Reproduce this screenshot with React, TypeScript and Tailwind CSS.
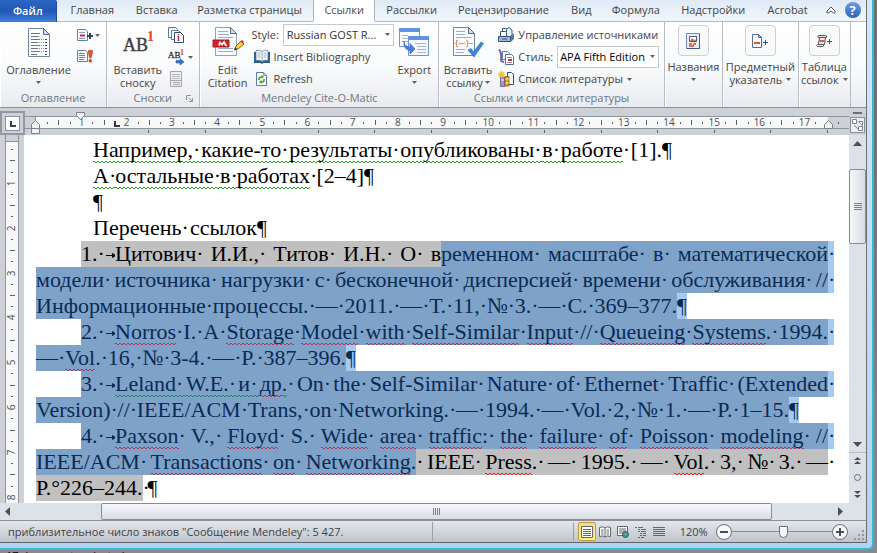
import { useState } from "react"
import type { ReactNode } from "react"
import clsx from "clsx"

type Tone = "plain" | "gray" | "blue" | "light"
type Mark = "red" | "green"

interface Word {
    text: string
    tone: Tone
    mark?: Mark
    // glued to the next piece: no space dot after it
    glue?: boolean
}

interface Line {
    words: Word[]
    item?: string
    indent?: string
    width?: string
    pilcrow?: Tone
    trailing?: Tone
}


// "~" in front of a word is a spelling mark, "^" is a grammar mark, "+" at the end glues it to the next one
function run(tone: Tone, source: string): Word[] {
    return source.split(" ").map((raw) => {
        const mark: Mark | undefined = raw[0] === "~" ? "red" : raw[0] === "^" ? "green" : undefined
        const glue = raw.endsWith("+")
        return { text: raw.slice(mark ? 1 : 0, glue ? -1 : undefined), tone, mark, glue }
    })
}

const lines: Line[] = [
    {
        indent: "ml-[57px]", width: "w-[579px]", pilcrow: "plain",
        words: run("plain", "^Например, ^какие-то ^результаты ^опубликованы ^в ^работе+  [1]."),
    },
    { indent: "ml-[57px]", width: "w-[281px]", pilcrow: "plain", words: run("plain", "^А ^остальные ^в ^работах+  [2–4]") },
    { indent: "ml-[57px]", width: "w-fit", pilcrow: "plain", words: [] },
    { indent: "ml-[57px]", width: "w-[174px]", pilcrow: "plain", words: run("plain", "Перечень ссылок") },
    {
        item: "1.", indent: "ml-[45px]", trailing: "light",
        words: [...run("gray", "Цитович И.И., Титов И.Н. О в+"), ...run("blue", "ременном масштабе в математической")],
    },
    { trailing: "light", words: run("blue", "модели источника нагрузки с бесконечной дисперсией времени обслуживания //") },
    { width: "w-[651px]", pilcrow: "light", words: run("blue", "Информационные процессы. — 2011. — Т. 11, № 3. — С. 369–377.") },
    {
        item: "2.", indent: "ml-[45px]", trailing: "light",
        words: run("blue", "~Norros I. A ~Storage ~Model ~with ~Self-Similar ~Input // ~Queueing ~Systems+ . 1994."),
    },
    { width: "w-[320px]", pilcrow: "light", words: run("blue", "— ~Vol+ . 16, № 3-4. — P. 387–396.") },
    {
        item: "3.", indent: "ml-[45px]", trailing: "light",
        words: run("blue", "^Leland ^W.E. ^и ~др+ ^.+  On the Self-Similar Nature of Ethernet Traffic (Extended"),
    },
    { width: "w-[763px]", pilcrow: "light", words: run("blue", "Version) // IEEE/ACM Trans, on Networking. — 1994. — Vol. 2, № 1. — P. 1–15.") },
    {
        item: "4.", indent: "ml-[45px]", trailing: "light",
        words: run("blue", "~Paxson V., ~Floyd S. ~Wide ~area ~traffic+ : ~the ~failure ~of ~Poisson ~modeling //"),
    },
    {
        trailing: "plain",
        words: [
            ...run("blue", "IEEE/ACM ~Transactions ~on ~Networking+ .+"),
            ...run("gray", " IEEE ~Press+ . — 1995. — ~Vol+ . 3, № 3. —"),
        ],
    },
    { width: "w-fit", pilcrow: "plain", words: [...run("gray", "P.°226–244.+"), ...run("plain", " ")] },
]

const tones: Record<Tone, string> = {
    plain: "text-black",
    gray: "bg-[#c0c0c0] text-black",
    blue: "bg-[#7fa3c8] text-[#0a2a55]",
    light: "bg-[#a6caf0] text-[#0a2a55]",
}

const wave =
    "bg-[linear-gradient(90deg,var(--wave)_50%,transparent_50%),linear-gradient(90deg,transparent_50%,var(--wave)_50%)] [background-size:4px_1px] bg-repeat-x [background-position:0_24px,0_25px]"

function waveColor(mark: Mark, tone: Tone) {
    if (mark === "green") return tone === "blue" ? "[--wave:#24806c]" : "[--wave:#1c9a1c]"
    return tone === "blue" ? "[--wave:#b0355f]" : "[--wave:#ff1a1a]"
}

function DocLine({ line }: { line: Line }) {
    const last = line.words.length - 1
    return (
        <p className={clsx("flex h-[26px] whitespace-nowrap", line.indent, line.width)}>
            {line.item && (
                <span className={clsx("flex w-[34px] shrink-0", tones[line.words[0].tone])}>
                    {line.item}·
                    <svg className="mt-[11px] h-[7px] w-3 shrink-0" viewBox="0 0 12 7" fill="none" stroke="currentColor">
                        <path d="M1 3.5h9M7.5 1.5l3 2-3 2z" fill="currentColor" />
                    </svg>
                </span>
            )}
            {line.words.map((word, i) => {
                const closed = word.glue || i === last
                const marked = word.mark && clsx(wave, waveColor(word.mark, word.tone))
                return (
                    <span key={i} className={clsx("flex", tones[word.tone], !closed && "grow")}>
                        <span className={clsx("flex", marked, word.mark === "green" && "grow")}>
                            {word.text}
                            {!closed && word.mark === "green" && <span className="w-[5px]">·</span>}
                        </span>
                        {!closed && word.mark !== "green" && <span className="w-[5px]">·</span>}
                    </span>
                )
            })}
            {line.pilcrow && <span className={tones[line.pilcrow]}>¶</span>}
            {line.trailing && <span className={clsx("-mr-1.5 w-1.5 shrink-0", tones[line.trailing])}>·</span>}
        </p>
    )
}


// icons

function Caret({ className }: { className?: string }) {
    return (
        <svg className={clsx("inline-block h-[3px] w-[5px] shrink-0", className)} viewBox="0 0 5 3">
            <path d="M0 0h5L2.5 3z" fill="#5c6066" />
        </svg>
    )
}

function TocIcon() {
    return (
        <svg className="size-8" viewBox="0 0 32 32">
            <path d="M5.5 1.5h15l6 6v22h-21z" fill="#fbfdff" stroke="#7186a3" />
            <path d="M20.5 1.5v6h6z" fill="#cfdff1" stroke="#526b8d" />
            <path d="M8 6.5h9M8 9.5h8M8 12.5h9M8 15.5h7M8 18.5h9M8 21.5h7M8 24.5h9M8 27.5h6" stroke="#66788f" />
            <path d="M18 12.5h3M16 15.5h5M18 18.5h3M16 21.5h5M18 24.5h3" stroke="#8a97aa" strokeDasharray="1 1" />
            <path d="M22 12.5h2M22 15.5h2M22 18.5h2M22 21.5h2M22 24.5h2M22 27.5h2" stroke="#2c4566" />
        </svg>
    )
}

function AddTextIcon() {
    return (
        <svg className="size-4" viewBox="0 0 16 16">
            <path d="M.5 2.5h8l2 2v9H.5z" fill="#f6faff" stroke="#6681a5" />
            <path d="M2 5.5h6M2 11.5h6" stroke="#8aa0bd" />
            <path d="M3 8.5h5" stroke="#c72c3b" strokeWidth="2" />
            <path d="M10 9h6M13 6v6" stroke="#33425a" strokeWidth="2" />
        </svg>
    )
}

function UpdateTocIcon() {
    return (
        <svg className="size-4" viewBox="0 0 16 16">
            <path d="M.5 1.5h8l2 2v9H.5z" fill="#f6faff" stroke="#6681a5" />
            <path d="M2 4.5h6M2 6.5h6M2 8.5h6M2 10.5h5" stroke="#71839d" />
            <path d="M11 2q2.500-2 5 0l-2 7h-1.500z" fill="#e8562a" stroke="#a8381b" strokeWidth=".5" />
            <circle cx="13.300" cy="11.700" r="1.700" fill="#d8401e" />
        </svg>
    )
}

function FootnoteIcon() {
    return (
        <svg className="size-8" viewBox="0 0 32 32" fontFamily="Liberation Serif, serif">
            <text x="1" y="24" fontSize="18" fill="#3c3c3c" stroke="#3c3c3c" strokeWidth=".4">AB</text>
            <text x="25" y="14" fontSize="14" fontWeight="bold" fill="#d8482a">1</text>
        </svg>
    )
}

function EndnoteIcon() {
    return (
        <svg className="size-4" viewBox="0 0 16 16" fontFamily="Liberation Serif, serif">
            <path d="M.5.5h7l2 2v8h-9z" fill="#f6faff" stroke="#5d7797" />
            <path d="M3.5 3.5h7l2 2v7h-9z" fill="#f6faff" stroke="#5d7797" />
            <path d="M6.5 5.5h6l3 3v7h-9z" fill="#fff" stroke="#2c4a73" />
            <text x="9" y="14" fontSize="10" fontWeight="bold" fill="#a32a3a">i</text>
        </svg>
    )
}

function NextFootnoteIcon() {
    return (
        <svg className="size-4" viewBox="0 0 16 16" fontFamily="Liberation Serif, serif">
            <text x="0" y="9" fontSize="9" fill="#333" stroke="#333" strokeWidth=".3">AB</text>
            <text x="12" y="6" fontSize="8" fontWeight="bold" fill="#d8482a">1</text>
            <path d="M8 11.5h4v-2l4 3.500-4 3v-2H8z" fill="#3f74cf" stroke="#2a56a4" strokeWidth=".6" />
        </svg>
    )
}

function ShowNotesIcon() {
    return (
        <svg className="size-4" viewBox="0 0 16 16">
            <path d="M2.5.5h11v15h-11z" fill="#f0eef1" stroke="#a7a5aa" />
            <path d="M4 3.5h8M4 5.5h8M4 7.5h8" stroke="#bbb7be" />
            <path d="M2.5 9.5h11" stroke="#a7a5aa" />
            <path d="M5 11.5h7M5 13.500h7" stroke="#aaa6ad" />
        </svg>
    )
}

function EditCitationIcon() {
    return (
        <svg className="size-8" viewBox="0 0 32 32">
            <path d="M3.5.5h15l6 6v22h-21z" fill="#f8fbff" stroke="#8da2c0" />
            <path d="M18.5.5v6h6z" fill="#cfdff1" stroke="#526b8d" />
            <path d="M6 4.5h10M6 7.5h11M6 10.5h15M6 21.5h15M6 24.5h15" stroke="#9aaccb" />
            <path d="M1 13h16v7H1z" fill="#d3222a" stroke="#a8161d" />
            <path d="M7 18.5l1-3 2 2 2-2.500 1.500 3 1.500.5" stroke="#fff" strokeWidth="1.700" fill="none" />
            <path d="M23 22l1-3 5-5 3 3-6 5z" fill="#ffd22e" stroke="#54461e" strokeWidth=".8" />
            <path d="M28.5 14.5L30 13l2 2-1.500 1.500z" fill="#d81f2a" />
            <path d="M22 23.5l1-3 2 2z" fill="#222" />
        </svg>
    )
}

function BookIcon() {
    return (
        <svg className="size-4 shrink-0" viewBox="0 0 16 16">
            <path d="M0 3h16v11H9.5L8 15l-1.500-1H0z" fill="#2a5f8e" />
            <path d="M2 1.5q4-1 6 1 2-2 6-1v10q-4-1-6 1-2-2-6-1z" fill="#fdfefe" stroke="#4b7396" strokeWidth=".7" />
            <path d="M8 2.5v10M3.500 4h3M3.500 6h3M3.500 8h3M9.500 4h3M9.500 6h3M9.500 8h3" stroke="#8096a8" strokeWidth=".8" />
        </svg>
    )
}

function RefreshIcon() {
    return (
        <svg className="size-4 shrink-0" viewBox="0 0 16 16">
            <path d="M2.5 1.5h7l3 3v10h-10z" fill="#fafcff" stroke="#5e7ba2" />
            <path d="M9.5 1.5v3h3z" fill="#cfe0f3" stroke="#5e7ba2" strokeWidth=".7" />
            <path d="M5 9V7.5Q5 6 8 6M10 8v1.500q0 1.500-3 1.500" fill="none" stroke="#57a01d" strokeWidth="1.600" />
            <path d="M7.5 3.800L10 6 7.500 8zM7.500 8.800L5 11l2.500 2z" fill="#57a01d" />
        </svg>
    )
}

function ExportIcon() {
    return (
        <svg className="size-8" viewBox="0 0 32 32">
            <path d="M1.5 1.5h20v18h-20z" fill="#fbfdff" stroke="#6c93d2" />
            <path d="M1 1h21v4H1z" fill="#5f93ea" />
            <path d="M4 8.5h6M4 11.5h6M4 14.5h6" stroke="#a9b6cb" />
            <path d="M10.5 9.5h20v19h-20z" fill="#f5f9ff" stroke="#6c93d2" />
            <path d="M10 9h21v4H10z" fill="#5f93ea" />
            <path d="M17 16.5h11M19 19.5h9M19 22.5h9M19 25.500h9" stroke="#a9b6cb" />
            <path d="M6 14q0 6 6 6v-3.500l5 5.500-5 5v-3.500q-7-1-6-9.500z" fill="#4a7fe0" stroke="#2e57b2" strokeWidth=".6" />
        </svg>
    )
}

function CitationIcon() {
    return (
        <svg className="size-8" viewBox="0 0 32 32">
            <path d="M1.5.5h15l6 6v22h-21z" fill="#f8fbff" stroke="#7186a3" />
            <path d="M16.5.5v6h6z" fill="#cfdff1" stroke="#526b8d" />
            <path d="M4 4.5h9M4 7.5h9M4 10.5h15M4 22.5h9M4 25.500h8M17 16.500h4" stroke="#9aaccb" />
            <path d="M6 13q-2 0-1.500 2 .3 1.500-1 1.500 1.300 0 1 1.500Q4 20 6 20M14 13q2 0 1.500 2-.3 1.500 1 1.500-1.300 0-1 1.500.5 2-1.500 2M6.500 17l1.200-1 1.200 1 1.200-1 1.200 1 1.200-1 1.200 1" fill="none" stroke="#d98836" />
            <path d="M16 23l3-1.500 2.500 3.500L29 15l2.500 1.500L22 30z" fill="#3d86dc" stroke="#2663b3" strokeWidth=".6" />
        </svg>
    )
}

function SourcesIcon() {
    return (
        <svg className="size-4 shrink-0" viewBox="0 0 16 16">
            <path d="M4.5 5V1.500h4L10 3v6H4.500z" fill="#f6fbff" stroke="#3b587f" />
            <path d="M8.5 4V2.500L11 .5l3 2.500V10H8.500z" fill="#e6f1fc" stroke="#3b587f" />
            <path d="M2.5 4.500h5l1 1V11h-6z" fill="#fff" stroke="#3b587f" />
            <path d="M.5 9.5h12v5H.5z" fill="#9db8d8" stroke="#34517a" />
            <path d="M12.5 9.5l3-2.500v5l-3 2.500z" fill="#557ba9" stroke="#34517a" strokeWidth=".6" />
            <path d="M4 12h5" stroke="#34517a" />
        </svg>
    )
}

function StyleIcon() {
    return (
        <svg className="size-4 shrink-0" viewBox="0 0 16 16">
            <path d="M1 .5q3 3 2 11l3 2" fill="none" stroke="#7263ad" strokeWidth="2" />
            <path d="M4.5 2.5h5l2 2v6h-7z" fill="#f2f6fd" stroke="#6c7da5" />
            <path d="M7.5 5.5h6l2 2v8h-8z" fill="#fff" stroke="#53719b" />
            <path d="M9 8.5h5M9 13.500h5" stroke="#7e93b4" />
            <path d="M10 11h4" stroke="#cc2d33" strokeWidth="2" />
        </svg>
    )
}

function BibliographyIcon() {
    return (
        <svg className="size-4 shrink-0" viewBox="0 0 16 16">
            <path d="M9.5 1.5h4l2 2v10h-6z" fill="#f6faff" stroke="#3f4a5c" />
            <path d="M2.5 6h4v9.500h-4z" fill="#a592c8" stroke="#62518b" strokeWidth=".8" />
            <path d="M7 5.500h4V15H7z" fill="#d9a520" stroke="#7c5b13" strokeWidth=".8" />
            <path d="M3 9h3M7.500 8h3M7.500 12h3" stroke="#fff4c4" />
            <path d="M3.500 0v7M0 3.500h7M1 1l5 5M6 1L1 6" stroke="#f2c331" strokeWidth="1.300" />
        </svg>
    )
}

function CaptionIcon() {
    return (
        <svg className="size-4" viewBox="0 0 16 16">
            <path d="M1.5.5h13v15h-13z" fill="#e7effa" stroke="#7088b8" />
            <path d="M4.5 3.5h7v5h-7z" fill="#fff" stroke="#3d5b97" />
            <path d="M5 8l2-3 2 2 1-1 1 2z" fill="#e26b26" />
            <path d="M4 11h3M8 11h3M4 13h5" stroke="#e04a20" strokeWidth="1.400" />
            <path d="M14.500 1v14.500H2" fill="none" stroke="#3d5b97" />
        </svg>
    )
}

function IndexIcon() {
    return (
        <svg className="size-4" viewBox="0 0 16 16">
            <path d="M.5 1.5h6l3 3v10h-9z" fill="#f4f8fe" stroke="#5a6f94" />
            <path d="M6.5 1.5v3h3z" fill="#c9d9ee" stroke="#4c6389" />
            <path d="M2 10h6" stroke="#e8552a" strokeWidth="2" />
            <path d="M11 9.500h5M13.500 7v5" stroke="#2a55a8" />
        </svg>
    )
}

function AuthoritiesIcon() {
    return (
        <svg className="size-4" viewBox="0 0 16 16">
            <path d="M2.5 2.5h7q2 0 1 2H3q-2 0-.5-2zM3.500 4.500h6l-1 7h-6zM1.500 11.500h6q1 2-1 2h-5q-2-1 0-2z" fill="#ecebea" stroke="#555" />
            <path d="M3.5 8h5" stroke="#e8552a" strokeWidth="2" />
            <path d="M11 8.500h5M13.500 6v5" stroke="#2a55a8" />
        </svg>
    )
}


// ribbon

const tabs = [
    { name: "Главная", grow: "flex-[72]" },
    { name: "Вставка", grow: "flex-[58]" },
    { name: "Разметка страницы", grow: "flex-[129]" },
    { name: "Ссылки", grow: "flex-[60]" },
    { name: "Рассылки", grow: "flex-[74]" },
    { name: "Рецензирование", grow: "flex-[111]" },
    { name: "Вид", grow: "flex-[46]" },
    { name: "Формула", grow: "flex-[64]" },
    { name: "Надстройки", grow: "flex-[92]" },
    { name: "Acrobat", grow: "flex-[58]" },
]

function TabBar() {
    const [active, setActive] = useState("Ссылки")
    return (
        <nav className="flex h-[22px] bg-linear-to-b from-[#dfeaf6] to-[#f3f7fb]">
            <button className="flex-[56] rounded-tr-xs border-r border-[#1d4a9a] bg-linear-to-b from-[#2d66c4] via-[#2258b5] to-[#3f7fdd] font-semibold text-white">
                Файл
            </button>
            {tabs.map((tab) => (
                <button
                    key={tab.name}
                    onClick={() => setActive(tab.name)}
                    className={clsx(
                        "flex min-w-0 justify-center border-b pt-0.5 whitespace-nowrap",
                        tab.grow,
                        active === tab.name ? "border-x border-x-[#a9b2bd] border-b-white bg-white text-[#4e4e4e]" : "border-b-[#b4bac2]",
                    )}
                >
                    {tab.name}
                </button>
            ))}
            <div className="flex flex-[46] items-center justify-center gap-[9px] border-b border-[#b4bac2] pb-px pl-1">
                <button aria-label="Свернуть ленту">
                    <svg className="h-2 w-[10px]" viewBox="0 0 10 8" fill="#fff" stroke="#55595f">
                        <path d="M1 5l4-4 4 4v2H7.500L5 5 2.500 7H1z" />
                    </svg>
                </button>
                <button aria-label="Справка" className="size-4 rounded-full bg-linear-to-b from-[#6a9ee6] to-[#2c62b9] text-[13px] leading-4 font-bold text-white">
                    ?
                </button>
            </div>
        </nav>
    )
}

function Group({ label, grow, launcher, children }: { label?: string; grow: string; launcher?: boolean; children?: ReactNode }) {
    return (
        <div className={clsx("flex min-w-0 flex-col border-r border-[#b9bdc3] shadow-[inset_1px_0_#fff]", grow)}>
            <div className="flex flex-1 justify-center">{children}</div>
            <div className="flex h-[17px] justify-center text-[#6d7682]">
                <span className="grow text-center whitespace-nowrap">{label}</span>
                {launcher && (
                    <button aria-label="Параметры сносок" className="mr-1.5 -ml-3">
                        <svg className="size-[7px]" viewBox="0 0 7 7" fill="none" stroke="#8d9299">
                            <path d="M.5 5V.5H5M3 3l3 3M6.500 3v3.500H3" />
                        </svg>
                    </button>
                )}
            </div>
        </div>
    )
}

function BigButton({ icon, top, bottom, caret }: { icon: ReactNode; top: string; bottom?: string; caret?: boolean }) {
    return (
        <button className="flex flex-col items-center pt-[5px] leading-[13px] whitespace-nowrap">
            {icon}
            <span className="mt-1">{top}</span>
            <span className="flex h-[13px] items-center gap-0.5">
                {bottom}
                {caret && <Caret />}
            </span>
        </button>
    )
}

function BoxButton({ icon, top, bottom }: { icon: ReactNode; top: string; bottom?: string }) {
    return (
        <button className="flex flex-col items-center pt-[3px] leading-[13px] whitespace-nowrap">
            <span className="flex size-[31px] items-center justify-center rounded-sm border border-[#cdd0d5] bg-[#f8f9fa]">{icon}</span>
            <span className="mt-1">{top}</span>
            <span className="flex h-[13px] items-center gap-1">
                {bottom}
                <Caret />
            </span>
        </button>
    )
}

function StyleSelect({ id, value, className }: { id: string; value: string; className?: string }) {
    return (
        <span className="relative flex grow">
            <select id={id} className={clsx("h-[22px] w-full appearance-none border border-[#c5cad1] bg-white", className)}>
                <option>{value}</option>
            </select>
            <Caret className="pointer-events-none absolute top-[9px] right-1" />
        </span>
    )
}

function Ribbon() {
    return (
        <div className="flex h-[86px] border-b border-[#8b9098] bg-linear-to-b from-white via-[#fafbfc] to-[#e9ebef]">
            <Group label="Оглавление" grow="flex-[107]">
                <BigButton icon={<TocIcon />} top="Оглавление" caret />
                <div className="flex flex-col gap-1.5 pt-[5px] pl-1.5">
                    <button aria-label="Добавить текст" className="flex items-center gap-0.5"><AddTextIcon /><Caret /></button>
                    <button aria-label="Обновить таблицу"><UpdateTocIcon /></button>
                </div>
            </Group>
            <Group label="Сноски" grow="flex-[93]" launcher>
                <BigButton icon={<FootnoteIcon />} top="Вставить" bottom="сноску" />
                <div className="flex flex-col gap-1.5 pt-[5px] pl-1.5">
                    <button aria-label="Вставить концевую сноску"><EndnoteIcon /></button>
                    <button aria-label="Следующая сноска" className="flex items-center gap-1"><NextFootnoteIcon /><Caret /></button>
                    <button aria-label="Показать сноски"><ShowNotesIcon /></button>
                </div>
            </Group>
            <Group label="Mendeley Cite-O-Matic" grow="flex-[240]">
                <BigButton icon={<EditCitationIcon />} top="Edit" bottom="Citation" />
                <div className="flex w-[146px] flex-col pt-0.5 pl-1">
                    <div className="flex h-[22px] items-center gap-1">
                        <label htmlFor="cite-style">Style:</label>
                        <StyleSelect id="cite-style" value="Russian GOST R..." className="pl-[3px] text-[#333]" />
                    </div>
                    <button className="flex h-[22px] items-center gap-1 pl-0.5 whitespace-nowrap"><BookIcon />Insert Bibliography</button>
                    <button className="flex h-[22px] items-center gap-1 pl-0.5"><RefreshIcon />Refresh</button>
                </div>
                <div className="pl-1">
                    <BigButton icon={<ExportIcon />} top="Export" caret />
                </div>
            </Group>
            <Group label="Ссылки и списки литературы" grow="flex-[226]">
                <BigButton icon={<CitationIcon />} top="Вставить" bottom="ссылку" caret />
                <div className="flex w-[167px] flex-col pt-0.5 pl-1.5">
                    <button className="flex h-[22px] items-center gap-1 whitespace-nowrap"><SourcesIcon />Управление источниками</button>
                    <div className="flex h-[22px] items-center gap-1">
                        <StyleIcon />
                        <label htmlFor="word-style">Стиль:</label>
                        <StyleSelect id="word-style" value="APA Fifth Edition" className="pl-0.5 text-black" />
                    </div>
                    <button className="flex h-[22px] items-center gap-1 whitespace-nowrap"><BibliographyIcon />Список литературы<Caret /></button>
                </div>
            </Group>
            <Group grow="flex-[58]"><BoxButton icon={<CaptionIcon />} top="Названия" /></Group>
            <Group grow="flex-[75]"><BoxButton icon={<IndexIcon />} top="Предметный" bottom="указатель" /></Group>
            <Group grow="flex-[52]"><BoxButton icon={<AuthoritiesIcon />} top="Таблица" bottom="ссылок" /></Group>
            <div className="flex-[15]" />
        </div>
    )
}


// rulers

function RulerMark({ k, vertical }: { k: number; vertical?: boolean }) {
    if (k % 4 === 0) return <span className={clsx(vertical && "-rotate-90")}>{k / 4}</span>
    if (k % 2 === 0) return <span className={clsx("bg-[#5b6069]", vertical ? "h-px w-[5px]" : "h-[5px] w-px")} />
    return <span className={clsx("bg-[#5b6069]", vertical ? "h-px w-0.5" : "h-0.5 w-px")} />
}

function TopRuler() {
    return (
        <div className="flex h-[27px] shrink-0 bg-[#cdd1d7]">
            <div className="pt-[3px]">
                <button aria-label="Выбор табуляции" className="flex h-6 w-[25px] items-center justify-center border-2 border-[#9398a1] bg-[#cdd1d7]">
                    <svg className="size-[15px] border border-[#8b9098] bg-white" viewBox="0 0 13 13" fill="none" stroke="#3a3d42" strokeWidth="2">
                        <path d="M5 4v5h5" />
                    </svg>
                </button>
            </div>
            <div className="relative min-w-0 grow pt-2">
                <div className="flex h-[13px] border-y border-[#8f949c]">
                    <div className="w-[11px] border-r border-[#8f949c]" />
                    <div className="flex grow bg-[#f8f8f9] px-1.5 text-[10px] leading-[11px] text-[#4a4e55]">
                        {Array.from({ length: 69 }, (_, i) => (
                            <div key={i} className="flex min-w-0 flex-1 items-center justify-center"><RulerMark k={i + 1} /></div>
                        ))}
                    </div>
                    <div className="flex w-[21px] items-center justify-center"><RulerMark k={1} /></div>
                </div>
                <div className="mt-px flex justify-between pr-[21px] pl-[123px]">
                    {Array.from({ length: 13 }, (_, i) => <span key={i} className="h-[3px] w-px bg-[#5b6069]" />)}
                </div>
                <svg className="absolute top-1 left-[51px] h-2 w-[9px]" viewBox="0 0 9 8" fill="#f2f2f2" stroke="#7c8088"><path d="M.5.5h8v3l-4 4-4-4z" /></svg>
                <svg className="absolute top-[13px] left-[89px] size-[6px]" viewBox="0 0 6 6" fill="none" stroke="#33363b" strokeWidth="2"><path d="M1 0v5h5" /></svg>
                <svg className="absolute top-3 left-[6px] h-[14px] w-[9px]" viewBox="0 0 9 14" fill="#f2f2f2" stroke="#7c8088"><path d="M.5 8.500v-4l4-4 4 4v4zM.5 8.500h8v5h-8z" /></svg>
                <svg className="absolute top-3 right-[16px] h-[9px] w-[9px]" viewBox="0 0 9 9" fill="#f2f2f2" stroke="#7c8088"><path d="M.5 8.500v-4l4-4 4 4v4z" /></svg>
            </div>
            <div className="flex w-[17px] flex-col items-center gap-[3px] pt-1">
                <span className="h-0.5 w-[9px] shrink-0 bg-[#6b7078]" />
                <button aria-label="Линейка" className="border border-[#8b9098] bg-[#eceef1]">
                    <svg className="h-[14px] w-[13px]" viewBox="0 0 13 14" fill="#fff" stroke="#7c8088"><path d="M1.500 1.500h4v4h-4zM7.500 3.500h4v4l-2-2zM7.500 8.500h4v4h-4zM3 7l4 4" /></svg>
                </button>
            </div>
        </div>
    )
}

function SideRuler() {
    return (
        <div className="w-6 shrink-0 overflow-hidden bg-[#cdd1d7] pl-[5px]">
            <div className="flex h-full w-[14px] flex-col border-x border-[#8f949c] bg-[#f8f8f9]">
                <div className="h-[7px] shrink-0 border-b border-[#8f949c] bg-[#cdd1d7]" />
                <div className="flex min-h-0 grow flex-col pt-0.5 text-[10px] leading-[11px] text-[#4a4e55]">
                    {Array.from({ length: 32 }, (_, i) => (
                        <div key={i} className="flex min-h-0 flex-1 items-center justify-center"><RulerMark k={i + 1} vertical /></div>
                    ))}
                </div>
            </div>
        </div>
    )
}


// scroll bars

function ScrollColumn() {
    return (
        <div className="flex w-[17px] shrink-0 flex-col items-center bg-[#dde1e8] pt-1.5">
            <button aria-label="Вверх" className="flex"><svg className="h-[5px] w-[9px]" viewBox="0 0 9 5"><path d="M0 5h9L4.500 0z" fill="#4b4e54" /></svg></button>
            <div className="flex w-full grow flex-col pt-[23px]">
                <div className="flex h-[75px] flex-col items-center justify-center gap-px rounded-xs border border-[#878c95] bg-linear-to-r from-[#f6f8fa] to-[#d9dde4]">
                    {[0, 1, 2, 3].map((i) => <span key={i} className="h-px w-2 bg-[#7c8088]" />)}
                </div>
            </div>
            <button aria-label="Вниз" className="flex"><svg className="h-[5px] w-[9px]" viewBox="0 0 9 5"><path d="M0 0h9L4.500 5z" fill="#4b4e54" /></svg></button>
            <div className="mt-[5px] flex w-full flex-col items-center gap-2.5 border-t border-[#b7bcc4] pt-1 pb-[22px]">
                <button aria-label="Предыдущая страница" className="flex"><svg className="size-[7px]" viewBox="0 0 7 7" fill="#4b4e54"><path d="M0 3h7L3.500 0zM0 7h7L3.500 4z" /></svg></button>
                <button aria-label="Выбор объекта перехода" className="size-[7px] rounded-full border border-[#6b7078]" />
                <button aria-label="Следующая страница" className="flex"><svg className="size-[7px]" viewBox="0 0 7 7" fill="#4b4e54"><path d="M0 0h7L3.500 3zM0 4h7L3.500 7z" /></svg></button>
            </div>
        </div>
    )
}

function ScrollRow() {
    return (
        <div className="flex h-[17px] items-center bg-[#dde1e8]">
            <button aria-label="Влево" className="w-6 pl-[5px]"><svg className="h-[9px] w-[5px]" viewBox="0 0 5 9"><path d="M5 0v9L0 4.500z" fill="#4b4e54" /></svg></button>
            <div className="flex-[77]" />
            <div className="flex flex-[671] items-center justify-center gap-px self-stretch rounded-xs border border-[#878c95] bg-linear-to-b from-[#f6f8fa] to-[#d9dde4]">
                {[0, 1, 2, 3].map((i) => <span key={i} className="h-[7px] w-px bg-[#7c8088]" />)}
            </div>
            <div className="flex-[66]" />
            <button aria-label="Вправо" className="w-[11px]"><svg className="h-[9px] w-[5px]" viewBox="0 0 5 9"><path d="M0 0v9l5-4.500z" fill="#4b4e54" /></svg></button>
        </div>
    )
}


// status bar

function ViewIcon({ kind }: { kind: string }) {
    return (
        <svg className="size-3" viewBox="0 0 12 12" fill="none" stroke="#62666d">
            {kind === "print" && <path d="M.5.5h11v11H.5zM2 3.500h8M2 5.500h8M2 7.500h8M2 9.500h8" fill="#fff" />}
            {kind === "read" && <path d="M6 2Q4 0 .5 1.500v9Q4 9 6 11q2-2 5.500-.5v-9Q8 0 6 2zv9M2 4h2.500M2 6h2.500M2 8h2.500M7.500 4H10M7.500 6H10M7.500 8H10" fill="#fff" />}
            {kind === "web" && (
                <>
                    <path d="M.5.5h10v9H.5zM2 3h7M2 5h7M2 7h4" fill="#fff" />
                    <circle cx="8.500" cy="8.500" r="3" fill="#3f8fae" stroke="#2d5f7c" />
                    <path d="M7 8l2-1.500 1 1.500-1.500 2z" fill="#63b34a" stroke="none" />
                </>
            )}
            {kind === "outline" && <path d="M0 1.500h8M3 3.500h8M3 5.500h8M5 7.500h6M5 9.500h6M3 11.500h6" strokeDasharray="2 1 20" />}
            {kind === "draft" && <path d="M0 1.500h12M0 3.500h12M0 5.500h12M0 7.500h12M0 9.500h12" />}
        </svg>
    )
}

const views = [
    { kind: "print", name: "Разметка страницы" },
    { kind: "read", name: "Режим чтения" },
    { kind: "web", name: "Веб-документ" },
    { kind: "outline", name: "Структура" },
    { kind: "draft", name: "Черновик" },
]

function StatusBar() {
    const [view, setView] = useState("print")
    return (
        <footer className="flex h-[23px] shrink-0 items-center border-y border-t-[#8d929a] border-b-[#5f646c] bg-linear-to-b from-[#e4e7eb] to-[#bfc4cc] text-[#3f3f3f]">
            <span className="min-w-0 flex-[431] pl-2 whitespace-nowrap">приблизительное число знаков "Сообщение Mendeley": 5 427.</span>
            <span className="h-[19px] flex-[142] border-x border-[#9aa0a8]" />
            <div className="flex min-w-0 flex-[293] items-center pl-1">
                {views.map((v) => (
                    <button
                        key={v.kind}
                        aria-label={v.name}
                        onClick={() => setView(v.kind)}
                        className={clsx(
                            "flex h-[19px] w-[18px] shrink-0 items-center justify-center rounded-xs border",
                            view === v.kind ? "border-[#c29b3c] bg-linear-to-b from-[#fbd98a] to-[#fff27d]" : "border-transparent",
                        )}
                    >
                        <ViewIcon kind={v.kind} />
                    </button>
                ))}
                <span className="ml-3">120%</span>
                <button aria-label="Уменьшить" className="ml-2 flex size-4 shrink-0 items-center justify-center rounded-full border border-[#6b7078] bg-[#f6f7f8]">
                    <span className="h-0.5 w-2 bg-[#4b4e54]" />
                </button>
                <input
                    type="range"
                    aria-label="Масштаб"
                    min={0}
                    max={100}
                    defaultValue={52}
                    className="h-3 w-0 min-w-0 grow appearance-none bg-[linear-gradient(#8a9098,#8a9098)] bg-[length:100%_1px] bg-center bg-no-repeat [&::-webkit-slider-thumb]:h-3 [&::-webkit-slider-thumb]:w-[9px] [&::-webkit-slider-thumb]:appearance-none [&::-webkit-slider-thumb]:rounded-b-full [&::-webkit-slider-thumb]:border [&::-webkit-slider-thumb]:border-[#6b7078] [&::-webkit-slider-thumb]:bg-[#f6f7f8]"
                />
                <button aria-label="Увеличить" className="flex size-4 shrink-0 items-center justify-center rounded-full border border-[#6b7078] bg-[#f6f7f8]">
                    <svg className="size-2" viewBox="0 0 8 8" stroke="#4b4e54" strokeWidth="2"><path d="M0 4h8M4 0v8" /></svg>
                </button>
                <svg className="mt-2 mr-px ml-1.5 size-[11px] shrink-0" viewBox="0 0 11 11" fill="#9298a1">
                    <path d="M8 0h2v2H8zM8 4h2v2H8zM4 4h2v2H4zM8 8h2v2H8zM4 8h2v2H4zM0 8h2v2H0z" />
                </svg>
            </div>
        </footer>
    )
}


export default function App() {
    return (
        <div className="flex h-screen flex-col overflow-hidden bg-linear-to-b from-[#6e6e6e] via-[#777] to-[#8a8a8a] pr-[3px] font-['Open_Sans','Noto_Sans',sans-serif] text-[11px] leading-4 text-[#444]">
            <div className="flex min-h-0 grow flex-col rounded-br-md border-r-2 border-b-2 border-[#2fb9dc] bg-linear-to-b from-[#d5e6f5] via-[#c8dcf2] to-[#b5d3ee] pr-[5px] pb-[5px]">
                <div className="flex min-h-0 grow flex-col border-r border-[#6b7078]">
                    <header>
                        <TabBar />
                        <Ribbon />
                    </header>
                    <TopRuler />
                    <div className="flex min-h-0 grow">
                        <div className="flex min-w-0 grow flex-col">
                            <div className="flex min-h-0 grow">
                                <SideRuler />
                                <main className="min-w-0 grow overflow-hidden bg-white pt-0.5 pr-[21px] pl-3 font-['Liberation_Serif',serif] text-[22px] leading-[26px]">
                                    {lines.map((line, i) => <DocLine key={i} line={line} />)}
                                </main>
                            </div>
                            <ScrollRow />
                        </div>
                        <ScrollColumn />
                    </div>
                    <StatusBar />
                </div>
            </div>
            <div className="h-[3px] shrink-0 overflow-hidden pl-1.5 leading-3 text-black">17 documents selected</div>
        </div>
    )
}
